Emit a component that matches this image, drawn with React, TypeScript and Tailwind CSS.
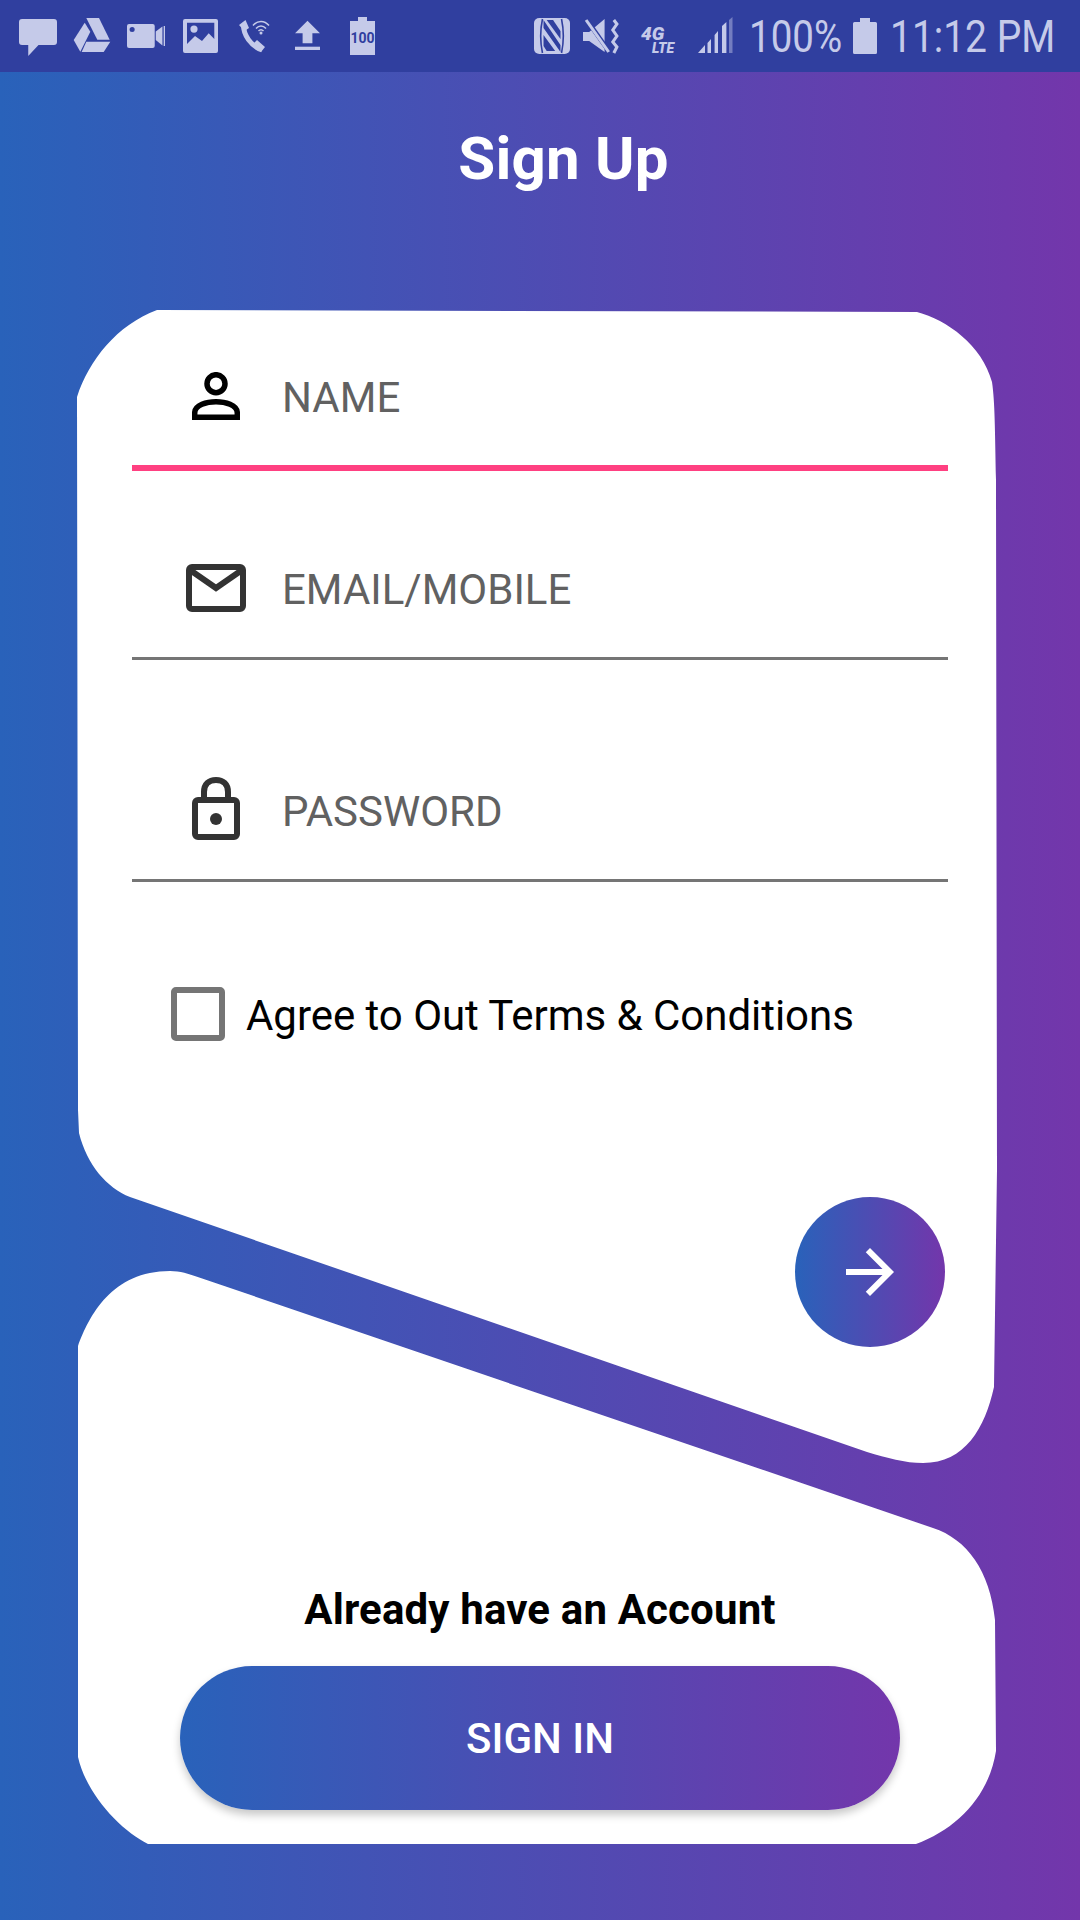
const roboto = "font-['Roboto',sans-serif]";

function StatusIcons() {
  return (
    <div className="flex items-start">
      {/* message */}
      <svg width="38" height="37" viewBox="0 0 37 37" preserveAspectRatio="none" className="ml-[19px] mt-[19px]" fill="#c5cae9">
        <path d="M3 0h31a3 3 0 0 1 3 3v20a3 3 0 0 1-3 3H19L9 37V26H3a3 3 0 0 1-3-3V3a3 3 0 0 1 3-3z" />
      </svg>
      {/* drive */}
      <svg width="38" height="34" viewBox="0 0 38 34" className="ml-[16px] mt-[18px]" fill="#c5cae9">
        <path d="M13.3 0H26L36.7 21.7H24.3z" />
        <path d="M11.7 4.7L17.3 13.7L7.3 33.7L.7 22z" />
        <path d="M13.3 23.7H37.3L30.7 34H8.7z" />
      </svg>
      {/* video */}
      <svg width="38" height="24" viewBox="0 0 37 24" preserveAspectRatio="none" className="ml-[16px] mt-[24px]" fill="#c5cae9">
        <path fillRule="evenodd" d="M2 0h23a2 2 0 0 1 2 2v20a2 2 0 0 1-2 2H2a2 2 0 0 1-2-2V2a2 2 0 0 1 2-2zM5 3a2.5 2.5 0 1 0 0 5 2.5 2.5 0 0 0 0-5z" />
        <path d="M28 7.5L34.5 2.5V21.5L28 16z" />
        <rect x="35.7" y="2" width="1.3" height="20" />
      </svg>
      {/* image */}
      <svg width="35" height="34" viewBox="0 0 35 34" className="ml-[18px] mt-[19px]" fill="#c5cae9">
        <path fillRule="evenodd" d="M2 0h31a2 2 0 0 1 2 2v30a2 2 0 0 1-2 2H2a2 2 0 0 1-2-2V2a2 2 0 0 1 2-2zM4 3.7V25L12 17L19 22L25.7 14.3L31.3 20V3.7zM11 6.5a3.6 3.6 0 1 0 0 7.2 3.6 3.6 0 0 0 0-7.2z" />
      </svg>
      {/* wifi calling */}
      <svg width="32" height="34" viewBox="0 0 32 34" className="ml-[20px] mt-[19px]" fill="none" stroke="#c5cae9">
        <path d="M5.5 5C5 16 13 27 24 31" strokeWidth="5" />
        <path d="M1 6L7.5 1L11 9L6.5 12zM15 25L19 21L27 28L23 33z" fill="#c5cae9" stroke="none" />
        <path d="M15 6.5C19.5 1 26.5 1 31 6.5M18 9.5C21 6 25 6 28 9.5" strokeWidth="1.5" />
        <path d="M20.5 12C22 10.5 24 10.5 25.5 12" strokeWidth="1.5" />
        <circle cx="23" cy="14" r="1.5" fill="#c5cae9" stroke="none" />
      </svg>
      {/* upload */}
      <svg width="25" height="30" viewBox="0 0 24 30" preserveAspectRatio="none" className="ml-[25px] mt-[20px]" fill="#c5cae9">
        <path d="M12 .7L24 13.3H16.7V23.3H7.3V13.3H0z" />
        <rect y="26.7" width="24" height="3.3" />
      </svg>
      {/* battery 100 */}
      <svg width="25" height="38" viewBox="0 0 25 38" className="ml-[30px] mt-[17px]" fill="#c5cae9">
        <path d="M8 0H17V4H25V38H0V4H8z" />
        <text x="12.5" y="26" textAnchor="middle" fontFamily="Roboto, sans-serif" fontWeight="700" fontSize="14" fill="#303f9f">100</text>
      </svg>
    </div>
  );
}

function SystemIcons() {
  return (
    <div className="flex items-start">
      {/* nfc */}
      <svg width="36" height="36" viewBox="0 0 34 36" preserveAspectRatio="none" className="mt-[18px]">
        <rect width="34" height="36" rx="5" fill="#c5cae9" />
        <path d="M8 1C6 11 6 25 8 35M26 1C28 11 28 25 26 35" stroke="#303f9f" strokeWidth="1.5" fill="none" />
        <path d="M9 2L25 27V34L9 10zM9 17L20 33H12L9 28z" fill="#303f9f" />
        <path d="M12 2H18L25 13V21z" fill="#303f9f" />
      </svg>
      {/* mute vibrate */}
      <svg width="37" height="36" viewBox="0 0 36 36" preserveAspectRatio="none" className="ml-[13px] mt-[18px]" fill="#c5cae9">
        <path d="M0 14H6L21 1V34L6 23H0z" />
        <path d="M3 1L25 33" stroke="#303f9f" strokeWidth="4.5" />
        <path d="M3 2L25 34" stroke="#c5cae9" strokeWidth="3" />
        <path d="M30 2L33 6L29 12L33 18L29 24L33 29L30 35" stroke="#c5cae9" strokeWidth="3" fill="none" />
      </svg>
      {/* 4G LTE */}
      <svg width="36" height="30" viewBox="0 0 36 30" className="ml-[21px] mt-[25px] overflow-visible" fill="#c5cae9">
        <text x="0" y="15" fontFamily="Roboto, sans-serif" fontWeight="900" fontStyle="italic" fontSize="19">4G</text>
        <text x="11" y="28" fontFamily="Roboto, sans-serif" fontWeight="900" fontStyle="italic" fontSize="14">LTE</text>
      </svg>
      {/* signal */}
      <svg width="35" height="36" viewBox="0 0 35 36" className="ml-[21px] mt-[17px]" fill="#c5cae9">
        <path d="M0 36L7 28V36z" />
        <path d="M9.5 26L13 22V36H9.5z" />
        <path d="M16.6 18L20 14V36H16.6z" />
        <path d="M24 9L28.4 5V36H24z" />
        <path d="M31 3L34.5 0V36H31z" opacity="0.45" />
      </svg>
      <span className="ml-[16px] mt-[11px] w-[92px] origin-left scale-x-[0.875] whitespace-nowrap text-[44px] leading-[52px] text-[#c5cae9]">100%</span>
      {/* battery */}
      <svg width="24" height="36" viewBox="0 0 24 36" className="ml-[12px] mt-[18px]" fill="#c5cae9">
        <path d="M7 0H17V4H22.5A1.5 1.5 0 0 1 24 5.5V34.5A1.5 1.5 0 0 1 22.5 36H1.5A1.5 1.5 0 0 1 0 34.5V5.5A1.5 1.5 0 0 1 1.5 4H7z" />
      </svg>
      <span className="ml-[13px] mr-[26px] mt-[11px] w-[164px] origin-left scale-x-[0.885] whitespace-nowrap text-[44px] leading-[52px] text-[#c5cae9]">11:12 PM</span>
    </div>
  );
}

function FieldRow({ icon, label, height, active, iconOffset }: { icon: React.ReactNode; label: string; height: string; active?: boolean; iconOffset: string }) {
  return (
    <div className={`flex items-end ${height} ${active ? "border-b-[6px] border-[#ff4081]" : "border-b-[3px] border-[#757575]"}`}>
      <div className={`ml-[54px] flex w-[60px] justify-center ${iconOffset}`}>{icon}</div>
      <span className="mb-[42px] ml-[36px] text-[42px] leading-[50px] text-[#616161]">{label}</span>
    </div>
  );
}

export default function App() {
  return (
    <div className={`flex h-[1920px] w-[1080px] flex-col overflow-hidden bg-linear-to-r/srgb from-[#2962ba] to-[#7336ab] ${roboto}`}>
      <div className="flex h-[72px] shrink-0 justify-between bg-[#303f9f]">
        <StatusIcons />
        <SystemIcons />
      </div>

      <h1 className="ml-[47px] mt-[52px] text-center text-[60px] font-bold leading-[70px] tracking-[0.2px] text-white">Sign Up</h1>

      {/* top card */}
      <div className="ml-[77px] mt-[116px] h-[1153px] w-[920px] bg-white pl-[55px] pr-[49px] [clip-path:path('M80_0C40_15_12_50_0_87L1_800L2_823C10_855_30_878_53_887L683_1105L790_1142C810_1148_828_1153_846_1153C888_1153_908_1118_917_1077L920_860L919_170C918_120_918_92_915_72C905_35_870_10_840_2Z')]">
        <FieldRow
          active
          height="h-[161px]"
          label="NAME"
          iconOffset="mb-[45px]"
          icon={
            <svg width="48" height="48" viewBox="0 0 48 48" fill="none" stroke="#000" strokeWidth="5.5">
              <circle cx="24" cy="11.7" r="9" />
              <path d="M2.7 45.3V41C2.7 33 15 29.7 24 29.7C33 29.7 45.3 33 45.3 41V45.3Z" />
            </svg>
          }
        />
        <FieldRow
          height="h-[189px]"
          label="EMAIL/MOBILE"
          iconOffset="mb-[45px]"
          icon={
            <svg width="60" height="48" viewBox="0 0 60 48" fill="none" stroke="#333" strokeWidth="6">
              <rect x="3" y="3" width="54" height="42" rx="3" />
              <path d="M4 6L30 24L56 6" />
            </svg>
          }
        />
        <FieldRow
          height="h-[222px]"
          label="PASSWORD"
          iconOffset="mb-[39px]"
          icon={
            <svg width="48" height="63" viewBox="0 0 48 63" fill="none" stroke="#333" strokeWidth="6">
              <rect x="3" y="23" width="42" height="37" rx="3" />
              <path d="M12 23V15C12 7 17 3 24 3C31 3 36 7 36 15V23" />
              <circle cx="24" cy="42" r="6" fill="#333" stroke="none" />
            </svg>
          }
        />

        <div className="ml-[39px] mt-[104px] flex items-center">
          <div className="h-[54px] w-[54px] rounded-[5px] border-[6px] border-[#757575]" />
          <span className="ml-[21px] pt-[5px] text-[42px] leading-[50px] tracking-[-0.04px] text-black">Agree to Out Terms &amp; Conditions</span>
        </div>

        <div className="ml-[663px] mt-[156px] flex h-[150px] w-[150px] items-center justify-center rounded-full bg-linear-to-r/srgb from-[#2962ba] to-[#7336ab]">
          <svg width="72" height="72" viewBox="0 0 24 24" fill="#fff">
            <path d="M12 4l-1.41 1.41L16.17 11H4v2h12.17l-5.58 5.59L12 20l8-8z" />
          </svg>
        </div>
      </div>

      {/* bottom card */}
      <div className="ml-[77px] mt-[-192px] flex h-[573px] w-[920px] flex-col items-center bg-white pl-[6px] pt-[314px] [clip-path:path('M1_75C12_45_35_0_93_0C103_0_112_3_120_5.7L856_257C890_268_913_300_918_349L919_480C912_525_880_558_839_573L71_573C45_560_10_525_1_486Z')]">
        <p className="text-[42px] font-bold leading-[50px] tracking-[0.15px] text-black">Already have an Account</p>
        <button className="mt-[31px] flex h-[144px] w-[720px] items-center justify-center rounded-full bg-linear-to-r/srgb from-[#2962ba] to-[#7336ab] text-[42px] font-medium text-white shadow-[0_5px_8px_rgba(0,0,0,0.22)]">
          SIGN IN
        </button>
      </div>
    </div>
  );
}
